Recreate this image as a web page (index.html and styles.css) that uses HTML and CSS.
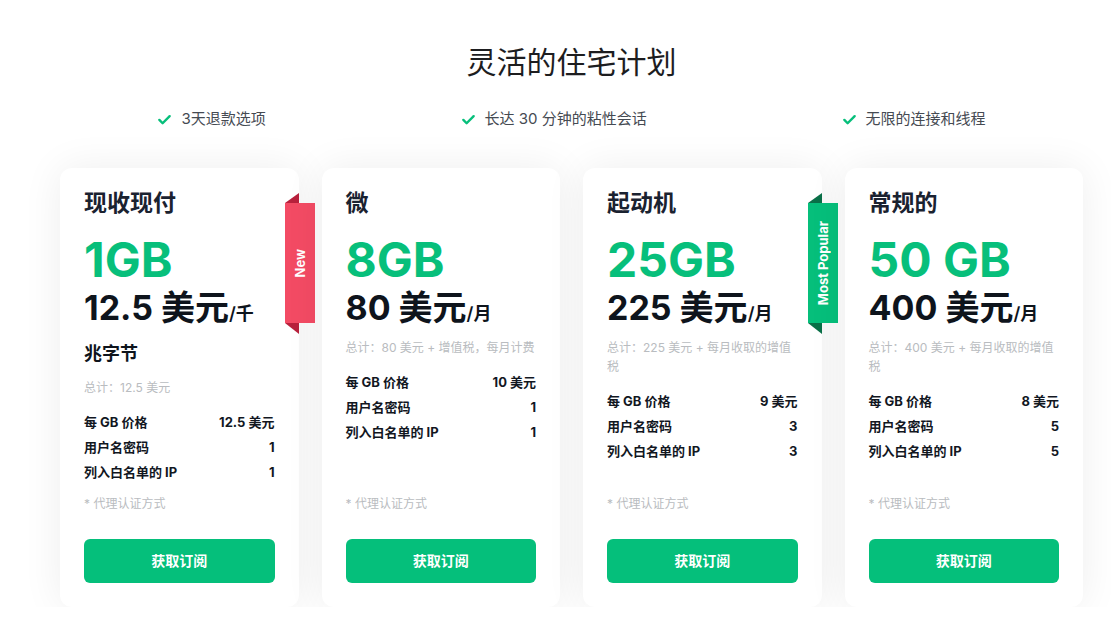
FILE: index.html
```html
<!DOCTYPE html>
<html lang="zh-CN">
<head>
    <meta charset="UTF-8">
    <meta name="viewport" content="width=device-width, initial-scale=1.0">
    <title>灵活的住宅计划</title>
    <link rel="stylesheet" href="styles.css">
</head>
<body>
    <div class="plans">
        <h1 class="plans-title">灵活的住宅计划</h1>

        <ul class="perks">
            <li class="perk">
                <svg class="check" viewBox="0 0 16 16"><path d="M2.5 8.5l3.5 3.5 7.5-7.5"/></svg>
                <span>3天退款选项</span>
            </li>
            <li class="perk">
                <svg class="check" viewBox="0 0 16 16"><path d="M2.5 8.5l3.5 3.5 7.5-7.5"/></svg>
                <span>长达 30 分钟的粘性会话</span>
            </li>
            <li class="perk">
                <svg class="check" viewBox="0 0 16 16"><path d="M2.5 8.5l3.5 3.5 7.5-7.5"/></svg>
                <span>无限的连接和线程</span>
            </li>
        </ul>

        <div class="cards">
            <!-- 现收现付 -->
            <div class="card">
                <div class="ribbon ribbon-red"><span>New</span></div>
                <h2 class="card-name">现收现付</h2>
                <div class="card-size">1GB</div>
                <div class="card-price">12.5 美元<span class="unit">/千<br>兆字节</span></div>
                <p class="card-total">总计：12.5 美元</p>
                <div class="card-rows">
                    <div class="row"><span>每 GB 价格</span><span>12.5 美元</span></div>
                    <div class="row"><span>用户名密码</span><span>1</span></div>
                    <div class="row"><span>列入白名单的 IP</span><span>1</span></div>
                </div>
                <p class="card-note">* 代理认证方式</p>
                <a class="card-btn" href="#">获取订阅</a>
            </div>

            <!-- 微 -->
            <div class="card">
                <h2 class="card-name">微</h2>
                <div class="card-size">8GB</div>
                <div class="card-price">80 美元<span class="unit">/月</span></div>
                <p class="card-total">总计：80 美元 + 增值税，每月计费</p>
                <div class="card-rows">
                    <div class="row"><span>每 GB 价格</span><span>10 美元</span></div>
                    <div class="row"><span>用户名密码</span><span>1</span></div>
                    <div class="row"><span>列入白名单的 IP</span><span>1</span></div>
                </div>
                <p class="card-note">* 代理认证方式</p>
                <a class="card-btn" href="#">获取订阅</a>
            </div>

            <!-- 起动机 -->
            <div class="card">
                <div class="ribbon ribbon-green"><span>Most Popular</span></div>
                <h2 class="card-name">起动机</h2>
                <div class="card-size">25GB</div>
                <div class="card-price">225 美元<span class="unit">/月</span></div>
                <p class="card-total">总计：225 美元 + 每月收取的增值税</p>
                <div class="card-rows">
                    <div class="row"><span>每 GB 价格</span><span>9 美元</span></div>
                    <div class="row"><span>用户名密码</span><span>3</span></div>
                    <div class="row"><span>列入白名单的 IP</span><span>3</span></div>
                </div>
                <p class="card-note">* 代理认证方式</p>
                <a class="card-btn" href="#">获取订阅</a>
            </div>

            <!-- 常规的 -->
            <div class="card">
                <h2 class="card-name">常规的</h2>
                <div class="card-size">50 GB</div>
                <div class="card-price">400 美元<span class="unit">/月</span></div>
                <p class="card-total">总计：400 美元 + 每月收取的增值税</p>
                <div class="card-rows">
                    <div class="row"><span>每 GB 价格</span><span>8 美元</span></div>
                    <div class="row"><span>用户名密码</span><span>5</span></div>
                    <div class="row"><span>列入白名单的 IP</span><span>5</span></div>
                </div>
                <p class="card-note">* 代理认证方式</p>
                <a class="card-btn" href="#">获取订阅</a>
            </div>
        </div>
    </div>
</body>
</html>
```

FILE: styles.css
```css
body {
    margin: 0;
    background: #fff;
    font-family: Inter, "Noto Sans CJK SC", sans-serif;
    color: #111820;
}
.plans {
    width: 1023px;
    margin-left: 60px;
    padding-top: 42px;
}
.plans-title {
    margin: 0;
    text-align: center;
    font-size: 30px;
    line-height: 40px;
    font-weight: 400;
    color: #1d1d1f;
}
.perks {
    list-style: none;
    margin: 25px 0 0;
    padding: 0;
    display: flex;
    justify-content: space-around;
}
.perk {
    display: flex;
    align-items: center;
    gap: 9px;
    font-size: 15px;
    line-height: 24px;
    color: #454a52;
}
.check {
    width: 15px;
    height: 15px;
    fill: none;
    stroke: #07bf7b;
    stroke-width: 2.6;
    stroke-linecap: round;
    stroke-linejoin: round;
}
.cards {
    display: grid;
    grid-template-columns: repeat(4, 1fr);
    gap: 23px;
    margin-top: 37px;
}
.card {
    position: relative;
    display: flex;
    flex-direction: column;
    min-height: 439px;
    box-sizing: border-box;
    padding: 20px 24px 24px;
    background: #fff;
    border-radius: 12px;
    box-shadow: 0 0 40px rgba(0, 0, 0, 0.07);
}
.card-name {
    margin: 0;
    font-size: 23px;
    line-height: 30px;
    font-weight: 700;
    color: #1a2230;
}
.card-size {
    margin-top: 17px;
    font-size: 48px;
    line-height: 50px;
    font-weight: 700;
    color: #07bf7b;
}
.card-price {
    margin-top: 3px;
    font-size: 34px;
    line-height: 40px;
    font-weight: 700;
    color: #0e141c;
}
.card-price .unit {
    font-size: 18px;
    line-height: 20px;
    font-weight: 600;
}
.card-total {
    margin: 10px 0 0;
    font-size: 12px;
    line-height: 19px;
    color: #b9bcc0;
}
.card-rows {
    margin-top: 13px;
}
.row {
    display: flex;
    justify-content: space-between;
    font-size: 13px;
    line-height: 25px;
    font-weight: 700;
    color: #12171f;
}
.card-note {
    margin: auto 0 0;
    padding-top: 8px;
    font-size: 12px;
    line-height: 18px;
    color: #b9bcc0;
}
.card-btn {
    display: block;
    margin-top: 26px;
    height: 44px;
    line-height: 44px;
    border-radius: 6px;
    background: #05bf7b;
    color: #fff;
    text-align: center;
    text-decoration: none;
    font-size: 14px;
    font-weight: 700;
}
.ribbon {
    position: absolute;
    top: 35px;
    right: -16px;
    width: 30px;
    height: 120px;
    display: flex;
    align-items: center;
    justify-content: center;
}
.ribbon span {
    writing-mode: vertical-rl;
    transform: rotate(180deg);
    color: #fff;
    font-size: 13px;
    font-weight: 700;
}
.ribbon::before,
.ribbon::after {
    content: "";
    position: absolute;
    left: 0;
    width: 0;
    height: 0;
    border-left: 14px solid transparent;
}
.ribbon::before {
    top: -10px;
    border-bottom: 10px solid var(--fold);
}
.ribbon::after {
    bottom: -11px;
    border-top: 11px solid var(--fold);
}
.ribbon-red {
    background: #f34b64;
    --fold: #b8213c;
}
.ribbon-green {
    background: #06bf7b;
    --fold: #0a7048;
}
```
